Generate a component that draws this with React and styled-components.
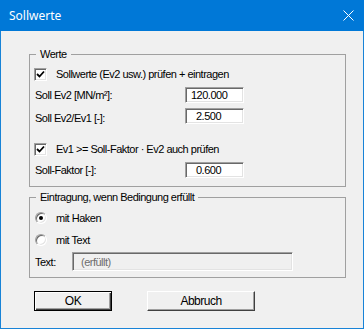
import styled, { createGlobalStyle } from "styled-components";

const GlobalStyle = createGlobalStyle`
  html, body {
    margin: 0;
    padding: 0;
    background: #ffffff;
  }
`;

const Window = styled.div`
  width: 364px;
  height: 329px;
  display: flex;
  flex-direction: column;
  font-family: "Liberation Sans", Arial, sans-serif;
  font-size: 11px;
  letter-spacing: -0.5px;
  color: #000;
`;

const TitleBar = styled.div`
  height: 31px;
  flex: none;
  display: flex;
  align-items: center;
  justify-content: space-between;
  padding: 0 10px 0 9px;
  background: #0078d7;
  color: #fff;
  font-family: "Noto Sans", "Open Sans", sans-serif;
  font-size: 12px;
  letter-spacing: 0;
`;

const Body = styled.div`
  flex: 1;
  display: flex;
  flex-direction: column;
  padding: 16px 17px 0 28px;
  background: #f0f0f0;
  border: 1px solid #1883d7;
  border-top: none;
`;

const Group = styled.fieldset`
  margin: ${(p) => (p.$top ? p.$top : 0)}px 0 0 0;
  padding: 3px 4px 6px 4px;
  border: 1px solid #a0a0a0;
  display: flex;
  flex-direction: column;
  min-width: 0;
`;

const Legend = styled.legend`
  margin-left: 2px;
  padding: 0 4px;
  line-height: 14px;
`;

const CheckRow = styled.div`
  height: ${(p) => p.$h || 20}px;
  margin-top: ${(p) => p.$gap || 0}px;
  display: flex;
  align-items: center;
  gap: 9px;
`;

const Box = styled.span`
  width: 13px;
  height: 13px;
  box-sizing: border-box;
  background: #fff;
  border: 1px solid;
  border-color: #a0a0a0 #ffffff #ffffff #a0a0a0;
  box-shadow: inset 1px 1px 0 #696969, inset -1px -1px 0 #e3e3e3;
  display: flex;
  align-items: center;
  justify-content: center;
`;

const Radio = styled.span`
  width: 12px;
  height: 12px;
  margin-left: 1px;
  box-sizing: border-box;
  border-radius: 50%;
  background: #fff;
  border: 1px solid;
  border-color: #a0a0a0 #ffffff #ffffff #a0a0a0;
  box-shadow: inset 1px 1px 0 #696969, inset -1px -1px 0 #e3e3e3;
  display: flex;
  align-items: center;
  justify-content: center;

  &::after {
    content: "";
    width: 4px;
    height: 4px;
    border-radius: 50%;
    background: #000;
    display: ${(p) => (p.$on ? "block" : "none")};
  }
`;

const FieldRow = styled.div`
  height: ${(p) => p.$h || 21}px;
  margin-top: ${(p) => p.$gap || 0}px;
  display: grid;
  grid-template-columns: ${(p) => p.$col}px auto;
  align-items: center;
`;

const Label = styled.span`
  margin-left: 1px;
  margin-top: ${(p) => p.$drop || 0}px;
`;

const Input = styled.div`
  width: ${(p) => p.$w}px;
  height: ${(p) => p.$h || 16}px;
  box-sizing: border-box;
  padding-left: ${(p) => p.$pad}px;
  display: flex;
  align-items: center;
  background: ${(p) => (p.$disabled ? "#f0f0f0" : "#fff")};
  color: ${(p) => (p.$disabled ? "#6d6d6d" : "#000")};
  border: 1px solid;
  border-color: #a0a0a0 #ffffff #ffffff #a0a0a0;
  box-shadow: inset 1px 1px 0 #696969, inset -1px -1px 0 #e3e3e3;
`;

const Buttons = styled.div`
  margin: 13px 0 0 5px;
  display: flex;
  gap: 35px;
`;

const Button = styled.div`
  width: ${(p) => p.$w}px;
  height: 20px;
  box-sizing: border-box;
  display: flex;
  align-items: center;
  justify-content: center;
  font-size: 12px;
  background: #f0f0f0;
  border: 1px solid;
  border-color: ${(p) =>
    p.$default ? "#000 #000 #000 #000" : "#ffffff #404040 #404040 #ffffff"};
  box-shadow: ${(p) =>
    p.$default
      ? "inset 1px 1px 0 #fff, inset -1px -1px 0 #404040, inset -2px -2px 0 #a0a0a0"
      : "inset -1px -1px 0 #a0a0a0"};
`;

const Check = () => (
  <svg width="9" height="9" viewBox="0 0 9 9">
    <path d="M1 4 L3.5 6.5 L8 1.5" fill="none" stroke="#000" strokeWidth="1.8" />
  </svg>
);

const Close = () => (
  <svg width="11" height="11" viewBox="0 0 11 11">
    <path d="M0.5 0.5 L10.5 10.5 M10.5 0.5 L0.5 10.5" stroke="#fff" strokeWidth="1" />
  </svg>
);

export default function App() {
  return (
    <Window>
      <GlobalStyle />
      <TitleBar>
        <span>Sollwerte</span>
        <Close />
      </TitleBar>
      <Body>
        <Group>
          <Legend>Werte</Legend>
          <CheckRow>
            <Box>
              <Check />
            </Box>
            <span>Sollwerte (Ev2 usw.) prüfen + eintragen</span>
          </CheckRow>
          <FieldRow $col={151}>
            <Label>Soll Ev2 [MN/m²]:</Label>
            <Input $w={59} $pad={5}>120.000</Input>
          </FieldRow>
          <FieldRow $col={151}>
            <Label $drop={4}>Soll Ev2/Ev1 [-]:</Label>
            <Input $w={59} $pad={10}>2.500</Input>
          </FieldRow>
          <CheckRow $gap={13}>
            <Box>
              <Check />
            </Box>
            <span>Ev1 &gt;= Soll-Faktor · Ev2 auch prüfen</span>
          </CheckRow>
          <FieldRow $col={151}>
            <Label>Soll-Faktor [-]:</Label>
            <Input $w={59} $pad={10}>0.600</Input>
          </FieldRow>
        </Group>
        <Group $top={3}>
          <Legend>Eintragung, wenn Bedingung erfüllt</Legend>
          <CheckRow $h={22}>
            <Radio $on />
            <span>mit Haken</span>
          </CheckRow>
          <CheckRow $h={22}>
            <Radio />
            <span>mit Text</span>
          </CheckRow>
          <FieldRow $col={38} $h={19} $gap={1}>
            <Label>Text:</Label>
            <Input $w={221} $h={19} $pad={8} $disabled>
              (erfüllt)
            </Input>
          </FieldRow>
        </Group>
        <Buttons>
          <Button $w={78} $default>
            OK
          </Button>
          <Button $w={108}>Abbruch</Button>
        </Buttons>
      </Body>
    </Window>
  );
}
